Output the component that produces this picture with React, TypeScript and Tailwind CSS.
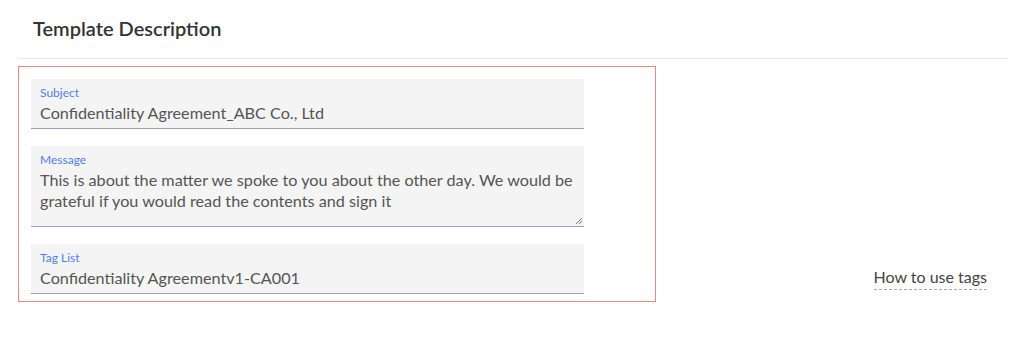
import React from "react";

function Field({
  label,
  value,
  multiline,
}: {
  label: string;
  value: string;
  multiline?: boolean;
}) {
  return (
    <div
      className={`relative w-[553px] bg-[#f4f4f4] border-b border-[#97a2c6] pl-[9px] pr-[3px] ${
        multiline ? "h-[81px] pt-[7px]" : "h-[50px] pt-[7px]"
      }`}
    >
      <div className="text-[12px] leading-[14px] text-[#4f7ef0]">{label}</div>
      <div className="text-[16.2px] leading-[21px] mt-[2px] text-[#555]">{value}</div>
      {multiline && (
        <svg
          className="absolute right-[1px] bottom-[1px]"
          width="9"
          height="9"
          viewBox="0 0 9 9"
        >
          <path d="M8 2 L2 8 M8 5 L5 8" stroke="#777" strokeWidth="1" />
        </svg>
      )}
    </div>
  );
}

export default function App() {
  return (
    <div
      className="w-[1015px] h-[342px] bg-white px-[18px] pt-[15px]"
      style={{ fontFamily: "Lato, 'Noto Sans', sans-serif" }}
    >
      <h2 className="pl-[15px] text-[20px] leading-[26px] font-semibold text-[#333] h-[43px]">
        Template Description
      </h2>
      <div className="w-[990px] border-t border-[#e3e6ec]" />

      <div className="flex items-end justify-between w-[990px] mt-[7px]">
        <div className="w-[638px] h-[236px] border border-[#ee8787] pt-[12px] pl-[12px] flex flex-col gap-[17px]">
          <Field label="Subject" value="Confidentiality Agreement_ABC Co., Ltd" />
          <Field
            multiline
            label="Message"
            value="This is about the matter we spoke to you about the other day. We would be grateful if you would read the contents and sign it"
          />
          <Field label="Tag List" value="Confidentiality Agreementv1-CA001" />
        </div>

        <a className="mr-[21px] mb-[12px] pb-[2px] text-[16px] leading-[20px] text-[#444] border-b border-dashed border-[#aaa] cursor-pointer">
          How to use tags
        </a>
      </div>
    </div>
  );
}
